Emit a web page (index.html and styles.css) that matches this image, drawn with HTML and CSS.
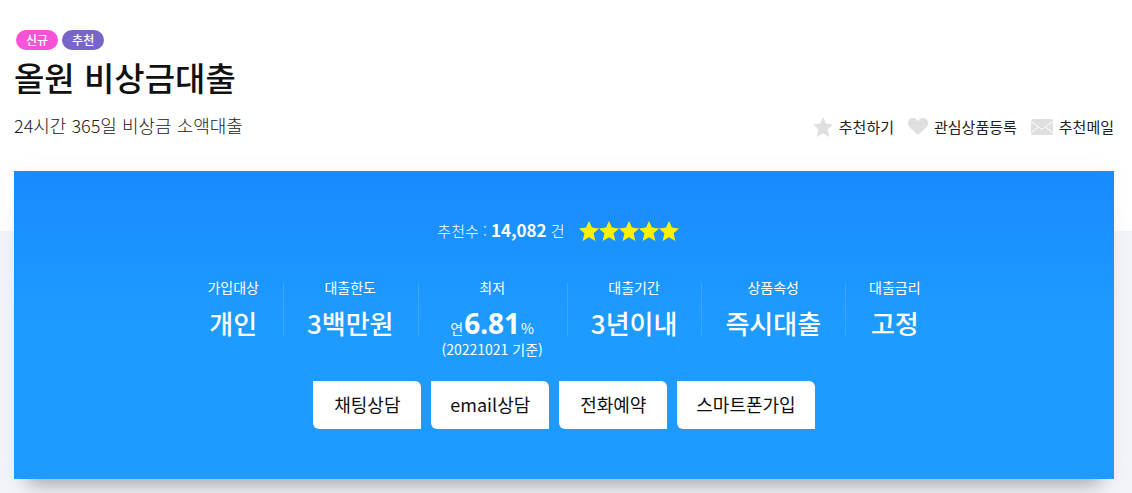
FILE: index.html
```html
<!DOCTYPE html>
<html lang="ko">
<head>
<meta charset="utf-8">
<meta name="viewport" content="width=device-width, initial-scale=1">
<title>올원 비상금대출</title>
<link rel="stylesheet" href="styles.css">
</head>
<body>
<svg class="sprite" aria-hidden="true">
  <symbol id="star" viewBox="0 0 20 20"><path d="M10 0l2.900 6.600 7.100.8-5.400 4.900 1.700 7.700L10 16.200l-6.300 3.800 1.700-7.700L0 7.400l7.100-.8z"/></symbol>
</svg>
<main class="page">
  <header class="head">
    <div class="tags"><span class="tag tag-new">신규</span><span class="tag tag-pick">추천</span></div>
    <h1 class="title">올원 비상금대출</h1>
    <div class="subrow">
      <p class="subtitle">24시간 365일 비상금 소액대출</p>
      <nav class="actions">
        <a class="action" href="#recommend"><svg class="icon-star" aria-hidden="true"><use href="#star"/></svg>추천하기</a>
        <a class="action" href="#favorite"><svg class="icon-heart" viewBox="0 0 20 17" aria-hidden="true"><path d="M10 17L1.600 9.200C-.6 7-.5 3.500 1.400 1.600 3.700-.7 7.800-.5 10 3.200 12.200-.5 16.300-.7 18.600 1.600c1.900 1.900 2 5.400-.2 7.600z"/></svg>관심상품등록</a>
        <a class="action" href="#mail"><svg class="icon-mail" viewBox="0 0 22 16" aria-hidden="true"><rect width="22" height="16" rx="1.500"/><path class="mail-fold" d="M0 2.500l11 8 11-8M.5 13.500l6.800-5.400M21.500 13.500l-6.800-5.400"/></svg>추천메일</a>
      </nav>
    </div>
  </header>
  <section class="panel">
    <div class="rating">
      <p class="count">추천수 : <strong class="count-number">14,082</strong> 건</p>
      <div class="stars" role="img" aria-label="별점 5점">
        <svg class="rate-star"><use href="#star"/></svg><svg class="rate-star"><use href="#star"/></svg><svg class="rate-star"><use href="#star"/></svg><svg class="rate-star"><use href="#star"/></svg><svg class="rate-star"><use href="#star"/></svg>
      </div>
    </div>
    <dl class="facts">
      <div class="fact"><dt class="label">가입대상</dt><dd class="value">개인</dd></div>
      <div class="fact"><dt class="label">대출한도</dt><dd class="value">3백만원</dd></div>
      <div class="fact"><dt class="label">최저</dt><dd class="value"><span class="unit">연</span><strong class="rate">6.81</strong><span class="unit">%</span></dd><dd class="note">(20221021 기준)</dd></div>
      <div class="fact"><dt class="label">대출기간</dt><dd class="value">3년이내</dd></div>
      <div class="fact"><dt class="label">상품속성</dt><dd class="value">즉시대출</dd></div>
      <div class="fact"><dt class="label">대출금리</dt><dd class="value">고정</dd></div>
    </dl>
    <div class="buttons">
      <button class="button" type="button">채팅상담</button>
      <button class="button" type="button">email상담</button>
      <button class="button" type="button">전화예약</button>
      <button class="button" type="button">스마트폰가입</button>
    </div>
  </section>
</main>
</body>
</html>
```
FILE: styles.css
```css
* { box-sizing: border-box; }
html { min-height: 100%; background: linear-gradient(#fff 231px, #f3f4f9 231px) no-repeat #f3f4f9; }
body, h1, p, dl, dd { margin: 0; }
body { font-family: "Noto Sans CJK KR", sans-serif; color: #111; }
.sprite { position: absolute; width: 0; height: 0; }
.page { padding: 30px 18px 14px 14px; }
.tags { display: flex; gap: 4px; padding-left: 2px; }
.tag { padding: 0 10px; border-radius: 10px; font-size: 12px; font-weight: 500; line-height: 20px; color: #fff; }
.tag-new { background: #f653d8; }
.tag-pick { background: #7965c9; }
.title { font-size: 33px; font-weight: 500; line-height: 54px; }
.subrow { display: flex; justify-content: space-between; align-items: center; height: 43px; }
.subtitle { padding-bottom: 2px; font-size: 18px; font-weight: 300; color: #222; }
.actions { display: flex; gap: 14px; padding-top: 2px; }
.action { display: flex; align-items: center; gap: 6px; font-size: 15px; line-height: 24px; color: #222; text-decoration: none; }
.action svg { fill: #dfdfdf; }
.icon-star { width: 20px; height: 20px; }
.icon-heart { width: 20px; height: 17px; }
.icon-mail { width: 22px; height: 16px; }
.mail-fold { fill: none; stroke: #fff; stroke-width: 1; }
.panel { margin-top: 24px; padding: 43px 0 50px; color: #fff; background: linear-gradient(#188bff, #1e9bff 50%); box-shadow: 0 20px 18px -14px rgba(0, 0, 0, .3), 0 0 24px rgba(0, 0, 0, .03); }
.rating { display: flex; justify-content: center; align-items: center; gap: 14px; padding-right: 12px; line-height: 32px; }
.count { font-size: 15px; font-weight: 300; }
.count-number { font-size: 17px; font-weight: 700; }
.stars { display: flex; }
.rate-star { width: 20px; height: 20px; fill: #fff000; }
.facts { display: flex; justify-content: center; padding-top: 30px; }
.fact { position: relative; padding: 0 24px; text-align: center; }
.fact + .fact::before { content: ""; position: absolute; left: 0; top: 6px; width: 1px; height: 53px; background: #3ba8ff; }
.label { font-size: 14px; line-height: 20px; }
.value { display: flex; justify-content: center; align-items: baseline; gap: 1px; height: 44px; padding-top: 8px; font-size: 26px; font-weight: 500; line-height: 36px; white-space: nowrap; }
.rate { font-family: "Noto Sans", sans-serif; font-size: 28px; font-weight: 700; }
.unit { font-size: 14px; font-weight: 400; line-height: 20px; }
.note { font-size: 14px; line-height: 16px; }
.buttons { display: flex; justify-content: center; gap: 10px; padding-top: 24px; }
.button { min-width: 108px; height: 48px; padding: 0 19px 3px; border: 0; border-radius: 0 6px 0 6px; background: #fff; color: #111; font: inherit; font-size: 18px; cursor: pointer; }
```
